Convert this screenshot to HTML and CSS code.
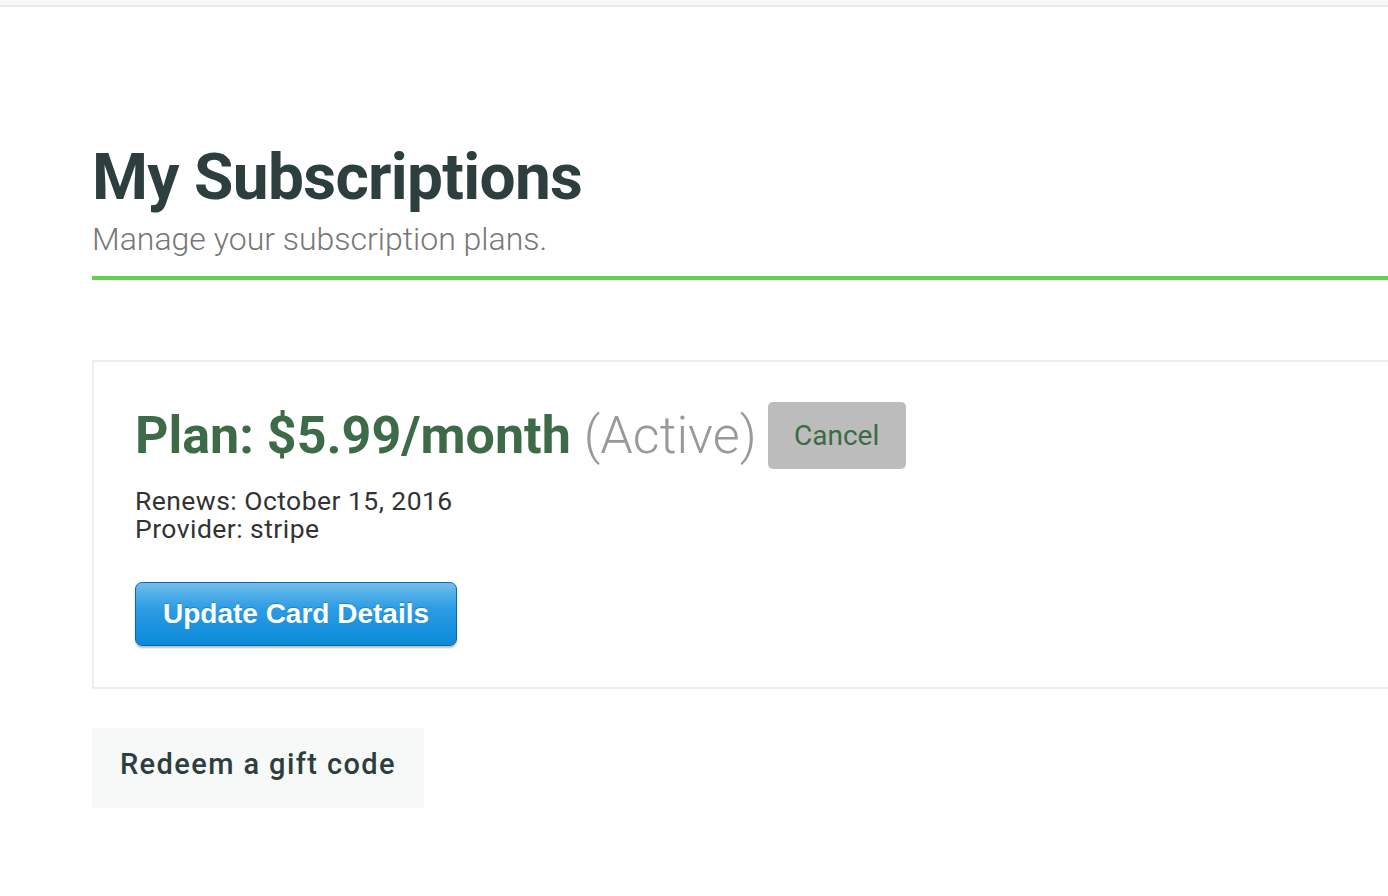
FILE: index.html
```html
<!DOCTYPE html>
<html>
<head>
<meta charset="utf-8">
<link rel="stylesheet" href="styles.css">
</head>
<body>
<div class="topbar"></div>
<main class="page">
  <header class="page-header">
    <h1 class="title">My Subscriptions</h1>
    <p class="subtitle">Manage your subscription plans.</p>
  </header>
  <section class="card">
    <div class="plan-row">
      <h2 class="plan"><span class="plan-name">Plan: $5.99/month</span> <span class="plan-status">(Active)</span></h2>
      <button class="btn-cancel">Cancel</button>
    </div>
    <div class="details">
      <div>Renews: October 15, 2016</div>
      <div>Provider: stripe</div>
    </div>
    <button class="btn-update">Update Card Details</button>
  </section>
  <button class="btn-redeem">Redeem a gift code</button>
</main>
</body>
</html>
```

FILE: styles.css
```css
html, body {
  margin: 0;
  padding: 0;
  background: #ffffff;
  overflow: hidden;
}
body {
  width: 1388px;
  height: 896px;
  font-family: Roboto, "Noto Sans", sans-serif;
}
.topbar {
  height: 5px;
  background: #f7f9f8;
  border-bottom: 2px solid #e6ebe9;
}
.page {
  margin-left: 92px;
  width: 1400px;
  padding-top: 132px;
}
.page-header {
  border-bottom: 4px solid #5fd34b;
  padding-bottom: 17px;
}
.title {
  margin: 0;
  font-size: 64px;
  font-weight: 700;
  color: #2d3e3e;
  line-height: 78px;
  letter-spacing: -0.7px;
}
.subtitle {
  margin: 2px 0 0;
  font-size: 32px;
  font-weight: 300;
  color: #777777;
  line-height: 40px;
}
.card {
  margin-top: 80px;
  border: 2px solid #eeeeee;
  padding: 40px 42px 41px 41px;
}
.plan-row {
  display: flex;
  align-items: center;
  gap: 11px;
}
.plan {
  margin: 0;
  font-size: 52px;
  line-height: 60px;
}
.plan-name {
  font-weight: 700;
  color: #3d6b47;
}
.plan-status {
  font-weight: 300;
  color: #999999;
}
.btn-cancel {
  background: #bcbcbc;
  border: none;
  border-radius: 5px;
  width: 138px;
  height: 67px;
  font-family: Roboto, sans-serif;
  font-size: 28px;
  color: #3d6b47;
  padding: 0;
}
.details {
  margin-top: 18px;
  font-size: 26.5px;
  line-height: 28px;
  letter-spacing: 0.45px;
  color: #333333;
}
.btn-update {
  margin-top: 39px;
  width: 322px;
  height: 64px;
  border: 1px solid #0b69a9;
  border-radius: 7px;
  background: linear-gradient(to bottom, #73bdec 0%, #2d9de4 40%, #0b8ad9 100%);
  box-shadow: 0 2px 2px rgba(0,0,0,0.25);
  color: #ffffff;
  font-family: "Liberation Sans", Arial, sans-serif;
  font-weight: 700;
  font-size: 28px;
  text-shadow: 0 -1px 0 rgba(0,0,0,0.2);
  padding: 0;
}
.btn-redeem {
  display: block;
  margin-top: 39px;
  width: 332px;
  height: 80px;
  background: #f7f9f8;
  border: none;
  border-radius: 3px;
  font-family: Roboto, sans-serif;
  font-weight: 500;
  font-size: 29px;
  letter-spacing: 1.4px;
  color: #2d3e3e;
  padding: 0 0 8px 0;
}
```
